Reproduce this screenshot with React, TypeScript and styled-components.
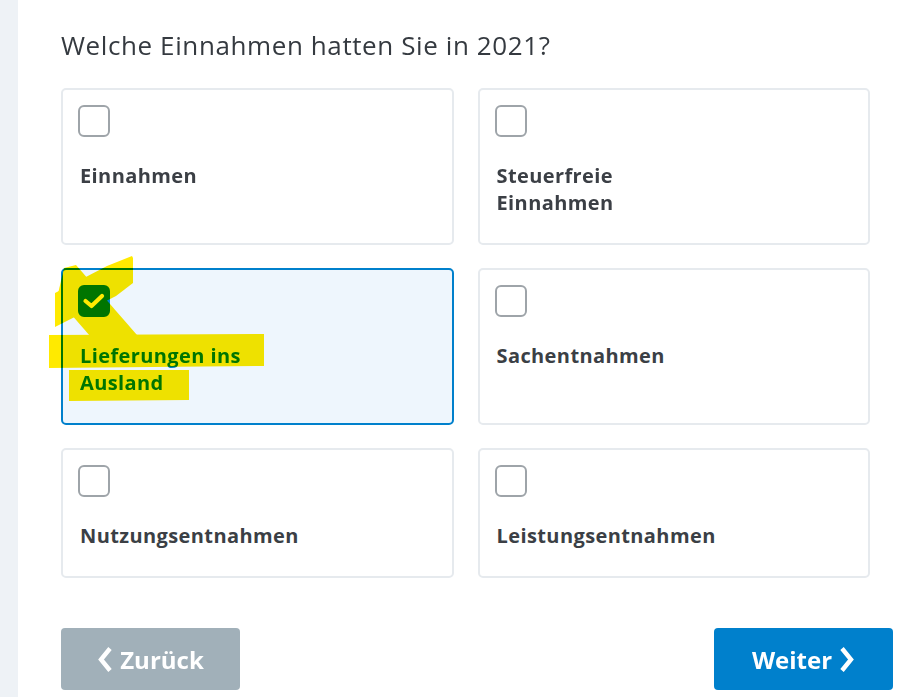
import React, { useState } from 'react';
import styled, { createGlobalStyle } from 'styled-components';

const colors = {
  text: '#353a40',
  label: '#3b3f45',
  border: '#e6eaee',
  box: '#9ea4a9',
  blue: '#0080cc',
  selectedBg: '#eef6fd',
  sidebar: '#eef2f6',
  back: '#a1b0b9',
  marker: '#ffea00',
};

const GlobalStyle = createGlobalStyle`
  html, body {
    margin: 0;
    padding: 0;
    background: #ffffff;
    font-family: "Open Sans", "Liberation Sans", sans-serif;
  }
  * {
    box-sizing: border-box;
  }
`;

interface Option {
  id: string;
  label: string;
}

const options: Option[] = [
  { id: 'einnahmen', label: 'Einnahmen' },
  { id: 'steuerfrei', label: 'Steuerfreie Einnahmen' },
  { id: 'ausland', label: 'Lieferungen ins Ausland' },
  { id: 'sachentnahmen', label: 'Sachentnahmen' },
  { id: 'nutzung', label: 'Nutzungsentnahmen' },
  { id: 'leistung', label: 'Leistungsentnahmen' },
];

const Checkbox = ({ checked }: { checked: boolean }) => (
  <Box $checked={checked}>
    {checked && (
      <svg width="24" height="18" viewBox="0 0 24 18">
        <polyline points="3.5,9 9.5,14 20,4" fill="none" stroke="#ffffff" strokeWidth="4.2" strokeLinecap="round" strokeLinejoin="round" />
      </svg>
    )}
  </Box>
);

// hand-drawn marker strokes laid over the chosen card
const MarkerOverlay = () => (
  <Marker width="260" height="170" viewBox="0 0 260 170">
    <g fill={colors.marker}>
      <polygon points="12,43 64,16 89,6 90,8 90,33 73,46 12,77" />
      <polygon points="21,18 33,15 94,85 47,86 14,48" />
      <polygon points="6,85 221,84 221,116 6,118" />
      <polygon points="26,120 146,120 146,150 26,151" />
    </g>
  </Marker>
);

const Chevron = ({ dir }: { dir: 'left' | 'right' }) => (
  <svg width="17" height="27" viewBox="0 0 17 27">
    <polyline
      points={dir === 'left' ? '13,2.5 4,13.5 13,24.5' : '4,2.5 13,13.5 4,24.5'}
      fill="none"
      stroke="#ffffff"
      strokeWidth="4.4"
      strokeLinejoin="miter"
    />
  </svg>
);

export default function App() {
  const [selected, setSelected] = useState<string[]>(['ausland']);

  const toggle = (id: string) =>
    setSelected((s) => (s.includes(id) ? s.filter((x) => x !== id) : [...s, id]));

  return (
    <>
      <GlobalStyle />
      <Page>
        <Sidebar />
        <Main>
          <Title>Welche Einnahmen hatten Sie in 2021?</Title>
          <Grid>
            {options.map((o) => {
              const checked = selected.includes(o.id);
              return (
                <Card key={o.id} $selected={checked} onClick={() => toggle(o.id)}>
                  <Checkbox checked={checked} />
                  <Label $selected={checked}>{o.label}</Label>
                  {o.id === 'ausland' && <MarkerOverlay />}
                </Card>
              );
            })}
          </Grid>
          <Actions>
            <NavButton $variant="back">
              <Chevron dir="left" />
              <span>Zurück</span>
            </NavButton>
            <NavButton $variant="next">
              <span>Weiter</span>
              <Chevron dir="right" />
            </NavButton>
          </Actions>
        </Main>
      </Page>
    </>
  );
}

const Page = styled.div`
  display: flex;
  min-height: 100vh;
`;

const Sidebar = styled.aside`
  width: 18px;
  flex-shrink: 0;
  background: ${colors.sidebar};
`;

const Main = styled.main`
  flex: 1;
  padding: 28px 19px 0 43px;
`;

const Title = styled.h1`
  margin: 0 0 25px;
  font-size: 26px;
  line-height: 35px;
  font-weight: 400;
  letter-spacing: 0.6px;
  color: ${colors.text};
`;

const Grid = styled.div`
  display: grid;
  grid-template-columns: 1fr 1fr;
  gap: 23px 24px;
  padding-right: 23px;
`;

const Card = styled.div<{ $selected: boolean }>`
  position: relative;
  display: flex;
  flex-direction: column;
  align-items: flex-start;
  gap: 25px;
  padding: 15px 15px 27px;
  border: 2px solid ${(p) => (p.$selected ? colors.blue : colors.border)};
  border-radius: 5px;
  background: ${(p) => (p.$selected ? colors.selectedBg : '#ffffff')};
  cursor: pointer;
`;

const Box = styled.span<{ $checked: boolean }>`
  display: flex;
  align-items: center;
  justify-content: center;
  width: 32px;
  height: 32px;
  border-radius: 6px;
  border: 2px solid ${(p) => (p.$checked ? colors.blue : colors.box)};
  background: ${(p) => (p.$checked ? colors.blue : '#ffffff')};
`;

const Label = styled.span<{ $selected: boolean }>`
  max-width: 228px;
  padding-left: 2px;
  font-size: 20px;
  line-height: 27px;
  font-weight: 700;
  letter-spacing: 0.4px;
  color: ${(p) => (p.$selected ? colors.blue : colors.label)};
`;

const Marker = styled.svg`
  position: absolute;
  left: -20px;
  top: -20px;
  pointer-events: none;
  mix-blend-mode: multiply;
`;

const Actions = styled.div`
  display: flex;
  justify-content: space-between;
  margin-top: 50px;
`;

const NavButton = styled.button<{ $variant: 'back' | 'next' }>`
  display: flex;
  align-items: center;
  justify-content: center;
  gap: 6px;
  width: 179px;
  height: 62px;
  border: none;
  border-radius: 4px;
  background: ${(p) => (p.$variant === 'back' ? colors.back : colors.blue)};
  color: #ffffff;
  font-family: "Open Sans", "Liberation Sans", sans-serif;
  font-size: 24px;
  font-weight: 700;
  cursor: pointer;
`;
